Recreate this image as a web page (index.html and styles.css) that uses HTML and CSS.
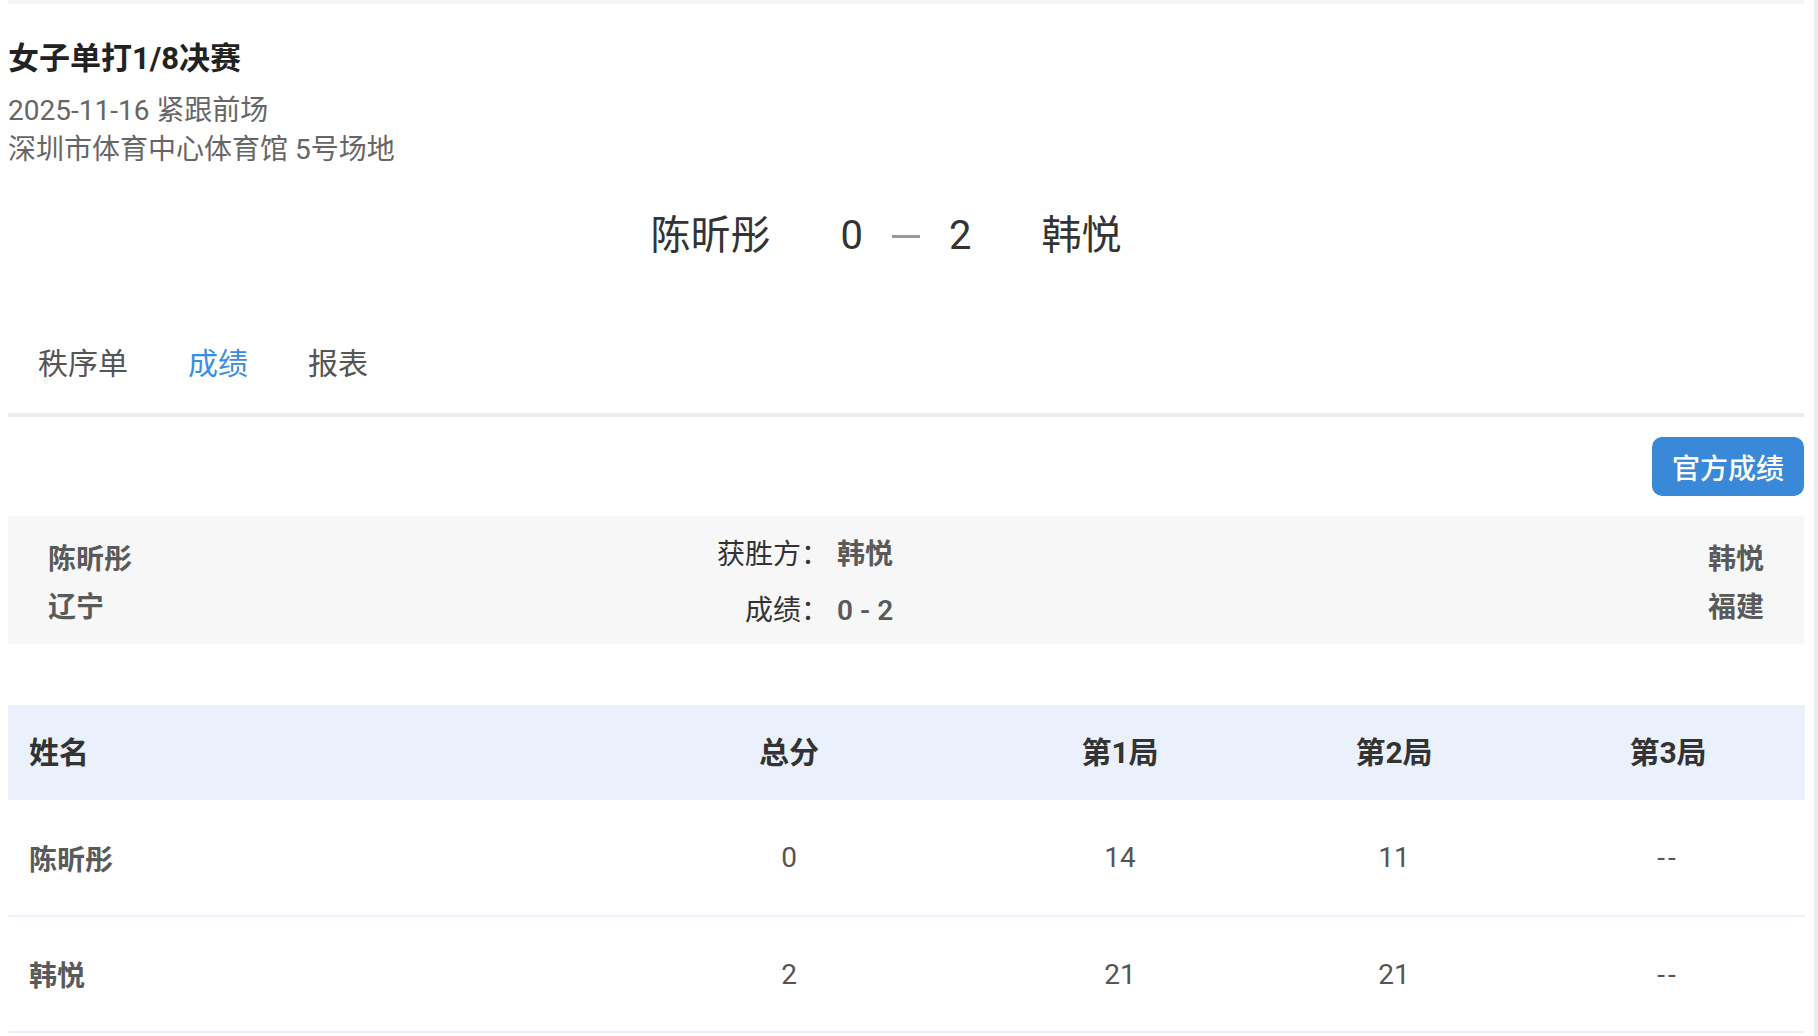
FILE: index.html
```html
<!DOCTYPE html>
<html lang="zh-CN">
<head>
    <meta charset="UTF-8">
    <meta name="viewport" content="width=device-width, initial-scale=1.0">
    <title>比赛成绩</title>
    <link rel="stylesheet" href="styles.css">
</head>
<body>
    <div class="page">
        <div class="top-strip"></div>

        <div class="match-info">
            <h1 class="match-title">女子单打1/8决赛</h1>
            <p class="match-meta">2025-11-16 紧跟前场</p>
            <p class="match-meta">深圳市体育中心体育馆 5号场地</p>
        </div>

        <div class="scoreboard">
            <div class="player player-left">陈昕彤</div>
            <div class="score">
                <span>0</span>
                <span class="dash"></span>
                <span>2</span>
            </div>
            <div class="player player-right">韩悦</div>
        </div>

        <div class="tabs">
            <div class="tab">秩序单</div>
            <div class="tab active">成绩</div>
            <div class="tab">报表</div>
        </div>

        <div class="toolbar">
            <button class="official-btn">官方成绩</button>
        </div>

        <div class="result-panel">
            <div class="side">
                <div class="side-name">陈昕彤</div>
                <div class="side-name">辽宁</div>
            </div>
            <div class="summary">
                <span class="summary-label">获胜方：</span>
                <span class="summary-value">韩悦</span>
                <span class="summary-label">成绩：</span>
                <span class="summary-value">0 - 2</span>
            </div>
            <div class="side side-right">
                <div class="side-name">韩悦</div>
                <div class="side-name">福建</div>
            </div>
        </div>

        <table class="score-table">
            <thead>
                <tr>
                    <th class="col-name">姓名</th>
                    <th class="col-total">总分</th>
                    <th class="col-game">第1局</th>
                    <th class="col-game">第2局</th>
                    <th class="col-game">第3局</th>
                </tr>
            </thead>
            <tbody>
                <tr>
                    <td class="col-name">陈昕彤</td>
                    <td>0</td>
                    <td>14</td>
                    <td>11</td>
                    <td class="empty">--</td>
                </tr>
                <tr>
                    <td class="col-name">韩悦</td>
                    <td>2</td>
                    <td>21</td>
                    <td>21</td>
                    <td class="empty">--</td>
                </tr>
            </tbody>
        </table>
    </div>
</body>
</html>
```

FILE: styles.css
```css
* {
    margin: 0;
    padding: 0;
    box-sizing: border-box;
}

body {
    font-family: Roboto, "Noto Sans CJK SC", sans-serif;
    background-color: #fff;
    color: #333;
    overflow: hidden;
}

.page {
    min-height: 100vh;
    padding: 0 10px 0 8px;
    border-right: 4px solid #e8eded;
}

.top-strip {
    height: 4px;
    background-color: #f5f5f5;
}

/* match header */
.match-info {
    padding-top: 35px;
}

.match-title {
    font-size: 31px;
    line-height: 40px;
    font-weight: bold;
    color: #222;
    margin-bottom: 12px;
}

.match-meta {
    font-size: 28px;
    line-height: 39px;
    color: #666;
}

.scoreboard {
    display: grid;
    grid-template-columns: 1fr auto 1fr;
    align-items: center;
    margin-top: 39px;
    font-size: 40px;
    line-height: 56px;
    color: #333;
}

.player-left {
    text-align: right;
}

.score {
    display: flex;
    align-items: center;
    margin: 0 70px;
}

.dash {
    width: 28px;
    height: 3px;
    background-color: #999;
    margin: 0 29px;
}

/* tabs */
.tabs {
    display: flex;
    margin-top: 80px;
    padding-bottom: 29px;
    border-bottom: 4px solid #e7ebf4;
}

.tab {
    padding: 0 30px;
    font-size: 30px;
    line-height: 40px;
    color: #555;
    cursor: pointer;
}

.tab.active {
    color: #3a8ee2;
}

.toolbar {
    display: flex;
    justify-content: flex-end;
    padding: 20px 0;
}

.official-btn {
    height: 59px;
    padding: 0 20px;
    border: none;
    border-radius: 10px;
    background-color: #3a89d8;
    color: #fff;
    font-family: inherit;
    font-size: 28px;
    font-weight: 500;
    cursor: pointer;
}

/* result panel */
.result-panel {
    display: flex;
    align-items: center;
    height: 128px;
    padding: 0 40px;
    background-color: #f7f7f7;
}

.side {
    flex: 0 0 669px;
    padding-top: 8px;
}

.side-right {
    flex: 0 0 auto;
    margin-left: auto;
    text-align: right;
}

.side-name {
    font-size: 28px;
    line-height: 48px;
    font-weight: 600;
    color: #5a5a5a;
}

.summary {
    display: grid;
    grid-template-columns: auto auto;
    column-gap: 8px;
    padding-top: 5px;
    font-size: 28px;
    line-height: 56px;
}

.summary-label {
    text-align: right;
    color: #333;
}

.summary-value {
    font-weight: 600;
    color: #5a5a5a;
}

/* score table */
.score-table {
    width: 100%;
    margin-top: 61px;
    border-collapse: collapse;
    table-layout: fixed;
}

.score-table th,
.score-table td {
    text-align: center;
    vertical-align: middle;
}

.score-table th {
    height: 95px;
    padding-bottom: 5px;
    background-color: #eaf1fd;
    font-size: 30px;
    font-weight: bold;
    color: #333;
}

.score-table td {
    height: 116px;
    border-bottom: 2px solid #eaf2fd;
    font-size: 28px;
    color: #555;
}

.score-table td.empty {
    letter-spacing: 3px;
}

.score-table .col-name {
    width: 587px;
    text-align: left;
    padding-left: 21px;
}

.score-table td.col-name {
    font-weight: 600;
    color: #5a5a5a;
}

.score-table .col-total {
    width: 388px;
}

.score-table .col-game {
    width: 274px;
}
```
